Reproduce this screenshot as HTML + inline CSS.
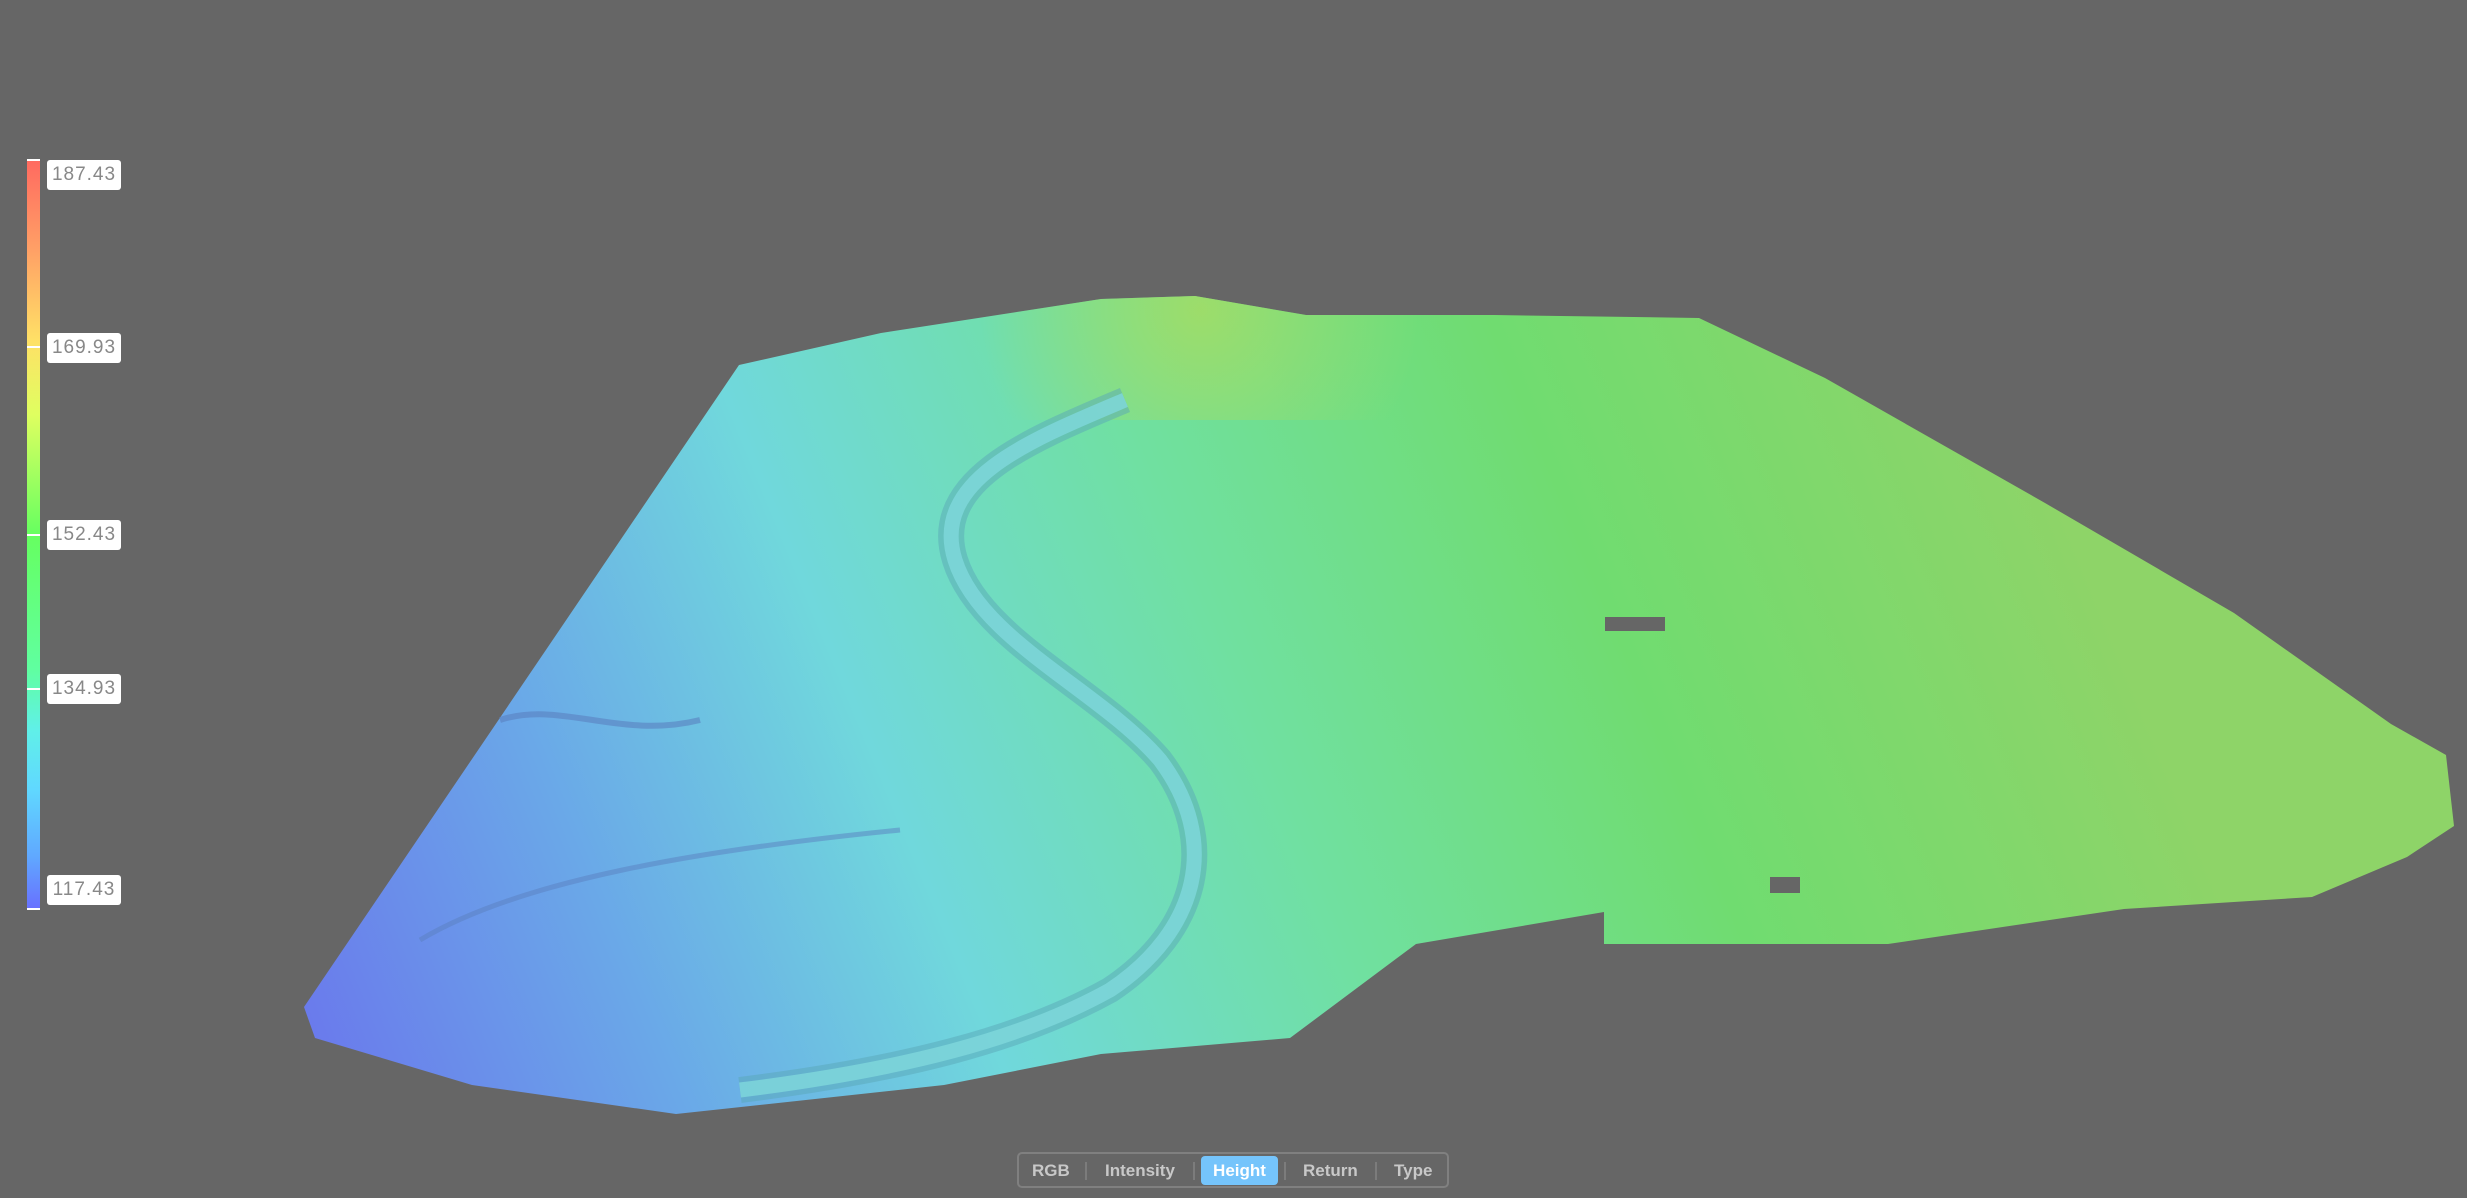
<!DOCTYPE html>
<html><head><meta charset="utf-8"><style>
html,body{margin:0;padding:0;width:2467px;height:1198px;background:#666;overflow:hidden;font-family:"Liberation Sans",sans-serif;}
.bar{position:absolute;left:27px;top:160px;width:13px;height:749px;border-radius:2px;background:linear-gradient(to bottom,#ff6a60 0%,#ffa066 12%,#ffe066 24%,#dfff60 34%,#66ff60 50%,#60ffa0 68%,#60f0e8 76%,#60d8ff 84%,#60a8ff 93%,#6870ff 100%);}
.tick{position:absolute;left:27px;width:13px;height:2px;background:#fff;}
.lab{position:absolute;left:47px;width:74px;height:30px;background:#fff;border-radius:3px;color:#888;font-size:19px;line-height:30px;text-align:center;letter-spacing:1px;}
.grp{position:absolute;left:1017px;top:1152px;width:432px;height:36px;border:2px solid #808080;border-radius:5px;box-sizing:border-box;}
.b{position:absolute;top:1156px;height:29px;line-height:29px;font-size:17px;font-weight:bold;color:#c8c8c8;}
.sep{position:absolute;top:1162px;width:2px;height:18px;background:#7c7c7c;}
</style></head><body>
<svg width="2467" height="1198" style="position:absolute;left:0;top:0">
<defs>
<linearGradient id="g" x1="300" y1="1050" x2="2000" y2="350" gradientUnits="userSpaceOnUse">
<stop offset="0" stop-color="#6a78ec"/>
<stop offset="0.18" stop-color="#6aa8e8"/>
<stop offset="0.35" stop-color="#70d8dc"/>
<stop offset="0.55" stop-color="#70e0a0"/>
<stop offset="0.75" stop-color="#70dc70"/>
<stop offset="1" stop-color="#8ed468"/>
</linearGradient>
<radialGradient id="y" cx="1200" cy="310" r="220" gradientUnits="userSpaceOnUse">
<stop offset="0" stop-color="#a8dc60" stop-opacity="0.8"/>
<stop offset="1" stop-color="#a8dc60" stop-opacity="0"/>
</radialGradient>
</defs>
<polygon fill="url(#g)" points="304,1007 739,365 881,333 1101,299 1195,296 1306,315 1494,315 1699,318 1825,378 2045,503 2234,613 2391,724 2446,755 2454,826 2407,857 2312,897 2124,909 1888,944 1604,944 1604,912 1416,944 1290,1038 1101,1054 944,1085 676,1114 472,1085 315,1038"/>
<polygon fill="url(#y)" points="881,333 1101,299 1195,296 1306,315 1494,315 1400,420 1000,420"/>
<path d="M1125,400 C1030,440 930,480 955,560 C980,640 1100,690 1160,760 C1220,840 1200,930 1110,990 C1020,1040 900,1070 740,1090" fill="none" stroke="#5aa8b8" stroke-width="26" opacity="0.5"/>
<path d="M1125,400 C1030,440 930,480 955,560 C980,640 1100,690 1160,760 C1220,840 1200,930 1110,990 C1020,1040 900,1070 740,1090" fill="none" stroke="#80d8dc" stroke-width="15" opacity="0.8"/>
<path d="M500,720 C560,700 620,740 700,720" fill="none" stroke="#5a80c0" stroke-width="6" opacity="0.6"/>
<path d="M420,940 C520,880 700,850 900,830" fill="none" stroke="#5a80c0" stroke-width="5" opacity="0.5"/>
<rect x="1605" y="617" width="60" height="14" fill="#666"/>
<rect x="1770" y="877" width="30" height="16" fill="#666"/>
</svg>
<div class="bar"></div>
<div class="tick" style="top:159px"></div>
<div class="tick" style="top:346px"></div>
<div class="tick" style="top:534px"></div>
<div class="tick" style="top:688px"></div>
<div class="tick" style="top:908px"></div>
<div class="lab" style="top:160px">187.43</div>
<div class="lab" style="top:333px">169.93</div>
<div class="lab" style="top:520px">152.43</div>
<div class="lab" style="top:674px">134.93</div>
<div class="lab" style="top:875px">117.43</div>
<div class="grp"></div>
<div class="b" style="left:1032px">RGB</div>
<div class="sep" style="left:1085px"></div>
<div class="b" style="left:1105px">Intensity</div>
<div class="sep" style="left:1193px"></div>
<div class="b" style="left:1201px;width:77px;background:#75c4fb;color:#fff;border-radius:4px;text-align:center">Height</div>
<div class="sep" style="left:1284px"></div>
<div class="b" style="left:1303px">Return</div>
<div class="sep" style="left:1375px"></div>
<div class="b" style="left:1394px">Type</div>
</body></html>
